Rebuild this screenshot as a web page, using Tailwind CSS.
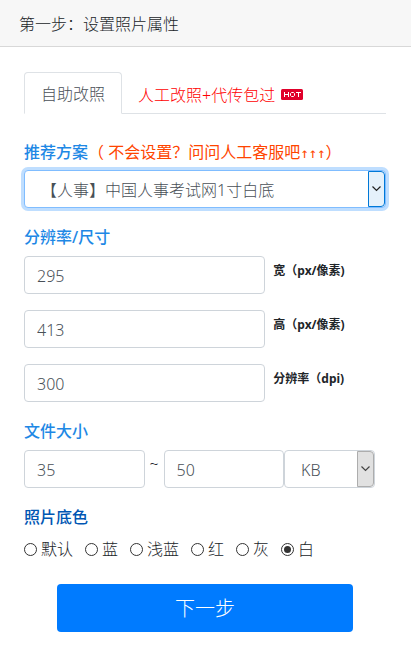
<!DOCTYPE html>
<html lang="zh-CN">
<head>
    <meta charset="UTF-8">
    <meta name="viewport" content="width=device-width, initial-scale=1.0">
    <title>设置照片属性</title>
    <script src="https://cdn.jsdelivr.net/npm/@tailwindcss/browser@4"></script>
</head>
<body class="bg-white text-base font-light text-[#212529] font-['Noto_Sans','Noto_Sans_CJK_SC',sans-serif]">
    <header class="border-b border-[#d8d8d8] bg-[#f7f7f7] px-[19px] pt-3 pb-[10px]">
        <h1>第一步：设置照片属性</h1>
    </header>

    <main class="pt-[25px] pr-[25px] pb-4 pl-6">
        <!-- Tabs -->
        <nav class="flex border-b border-[#dee2e6]">
            <a href="#self" class="-mb-px rounded-t border border-[#dee2e6] border-b-white bg-white px-4 pt-[9px] pb-[7px] text-[#495057]">自助改照</a>
            <a href="#service" class="flex items-center gap-[6px] px-4 pt-[10px] pb-[6px] text-[#ff0000]">
                <span>人工改照+代传包过</span>
                <svg class="h-[11px] w-[22px]" viewBox="0 0 22 11" role="img" aria-label="HOT">
                    <rect width="22" height="11" rx="1.5" fill="#e0002a"/>
                    <path d="M3.5 3v5M7.5 3v5M3.5 5.5h4M10.5 3.5h2l1 1v2l-1 1h-2l-1-1v-2zM15 3.5h5M17.5 3.5V8" fill="none" stroke="#fff"/>
                </svg>
            </a>
        </nav>

        <form>
            <div class="mt-[26px] h-6">
                <label for="plan" class="font-medium text-[#1e88e5]">推荐方案</label><span class="font-normal text-[#ff4500]">（ 不会设置？问问人工客服吧<span class="font-['DejaVu_Sans_Mono',monospace] text-sm">↑↑↑</span>）</span>
            </div>
            <div class="relative mt-[6px] flex">
                <select id="plan" class="h-[38px] w-full appearance-none rounded border border-[#80bdff] bg-white pt-px pl-4 text-[#495057] outline-none ring-3 ring-[#bfdeff]">
                    <option>【人事】中国人事考试网1寸白底</option>
                </select>
                <span class="pointer-events-none absolute inset-y-px right-px flex w-[17px] items-center justify-center rounded-r-sm border border-[#0078d7] bg-[#e5f1fb]">
                    <svg class="h-[6px] w-[9px]" viewBox="0 0 9 6"><path d="M.5.5l4 4 4-4" fill="none" stroke="#222" stroke-width="1.2"/></svg>
                </span>
            </div>

            <h2 class="mt-[17px] font-medium text-[#1e88e5]">分辨率/尺寸</h2>
            <div class="mt-[7px] grid grid-cols-[2fr_1fr] gap-y-4">
                <input id="width" type="text" value="295" class="h-[38px] min-w-0 rounded border border-[#ced4da] px-3 pt-[2px] text-[#495057]">
                <label for="width" class="pt-[5px] pl-2 text-xs leading-5 font-bold">宽（px/像素)</label>
                <input id="height" type="text" value="413" class="h-[38px] min-w-0 rounded border border-[#ced4da] px-3 pt-[2px] text-[#495057]">
                <label for="height" class="pt-[5px] pl-2 text-xs leading-5 font-bold">高（px/像素)</label>
                <input id="dpi" type="text" value="300" class="h-[38px] min-w-0 rounded border border-[#ced4da] px-3 pt-[2px] text-[#495057]">
                <label for="dpi" class="pt-[5px] pl-2 text-xs leading-5 font-bold">分辨率（dpi)</label>
            </div>

            <h2 class="mt-[17px] font-medium text-[#1e88e5]">文件大小</h2>
            <div class="mt-[7px] flex pr-[11px]">
                <input type="text" value="35" aria-label="最小" class="h-[38px] w-1/3 min-w-0 grow rounded border border-[#ced4da] px-3 pt-[2px] text-[#495057]">
                <span class="w-[19px] shrink-0 pt-[2px] text-center">~</span>
                <input type="text" value="50" aria-label="最大" class="h-[38px] w-1/3 min-w-0 grow rounded border border-[#ced4da] px-3 pt-[2px] text-[#495057]">
                <div class="relative w-[91px] shrink-0">
                    <select aria-label="单位" class="h-[38px] w-full appearance-none rounded border border-[#ced4da] bg-white pt-[2px] pl-4 text-[#495057]">
                        <option>KB</option>
                        <option>MB</option>
                    </select>
                    <span class="pointer-events-none absolute inset-y-px right-px flex w-[17px] items-center justify-center rounded-r-sm border border-[#adadad] bg-[#e1e1e1]">
                        <svg class="h-[6px] w-[9px]" viewBox="0 0 9 6"><path d="M.5.5l4 4 4-4" fill="none" stroke="#444" stroke-width="1.2"/></svg>
                    </span>
                </div>
            </div>

            <fieldset class="mt-[17px]">
                <legend class="font-medium text-[#0056b3]">照片底色</legend>
                <div class="mt-2 flex flex-wrap gap-x-3">
                    <label class="flex items-center gap-1"><input type="radio" name="bg" class="size-[13px] appearance-none rounded-full border border-[#333] checked:bg-[#333] checked:bg-clip-content checked:p-[2px]">默认</label>
                    <label class="flex items-center gap-1"><input type="radio" name="bg" class="size-[13px] appearance-none rounded-full border border-[#333] checked:bg-[#333] checked:bg-clip-content checked:p-[2px]">蓝</label>
                    <label class="flex items-center gap-1"><input type="radio" name="bg" class="size-[13px] appearance-none rounded-full border border-[#333] checked:bg-[#333] checked:bg-clip-content checked:p-[2px]">浅蓝</label>
                    <label class="flex items-center gap-1"><input type="radio" name="bg" class="size-[13px] appearance-none rounded-full border border-[#333] checked:bg-[#333] checked:bg-clip-content checked:p-[2px]">红</label>
                    <label class="flex items-center gap-1"><input type="radio" name="bg" class="size-[13px] appearance-none rounded-full border border-[#333] checked:bg-[#333] checked:bg-clip-content checked:p-[2px]">灰</label>
                    <label class="flex items-center gap-1"><input type="radio" name="bg" checked class="size-[13px] appearance-none rounded-full border border-[#333] checked:bg-[#333] checked:bg-clip-content checked:p-[2px]">白</label>
                </div>
            </fieldset>

            <div class="mt-[23px] px-[33px]">
                <button type="button" class="h-12 w-full rounded bg-[#007bff] pt-[2px] text-xl text-white">下一步</button>
            </div>
        </form>
    </main>
</body>
</html>
